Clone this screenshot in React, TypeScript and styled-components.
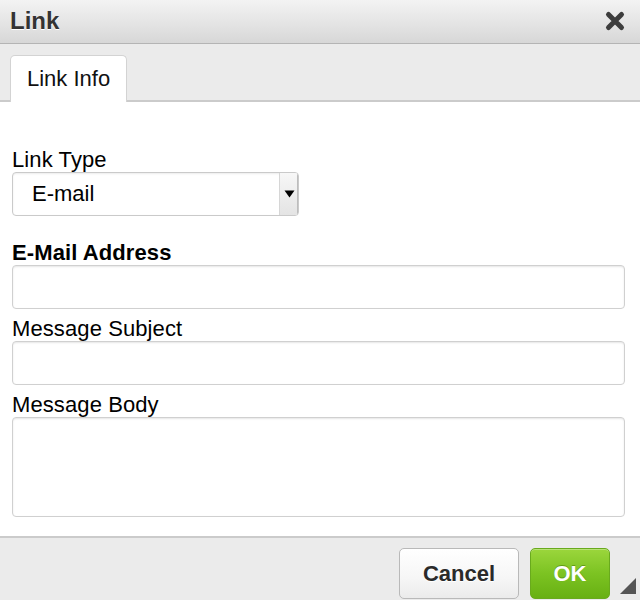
import React, { FC } from 'react';
import styled, { createGlobalStyle } from 'styled-components';

const GlobalStyle = createGlobalStyle`
  html, body {
    margin: 0;
    padding: 0;
    background: #ffffff;
  }
  body {
    font-family: "Liberation Sans", Arial, Helvetica, sans-serif;
    color: #000;
  }
  * {
    box-sizing: border-box;
  }
`

const StyledDialog = styled.div`
  position: relative;
  width: 640px;
  height: 600px;
  display: flex;
  flex-direction: column;
  overflow: hidden;
  background: #fff;
`

const StyledTitleBar = styled.div`
  height: 44px;
  display: flex;
  align-items: center;
  justify-content: space-between;
  padding: 0 13px 2px 10px;
  background: linear-gradient(to bottom, #f3f3f3 0%, #e4e4e4 55%, #d7d7d7 100%);
  border-bottom: 1px solid #b4b4b4;

  h1 {
    margin: 0;
    font-size: 24px;
    font-weight: bold;
    color: #333;
    text-shadow: 0 1px 0 #fff;
  }
`

const StyledClose = styled.button`
  border: 0;
  background: transparent;
  padding: 0;
  width: 24px;
  height: 24px;
  display: flex;
  align-items: center;
  justify-content: center;
  cursor: pointer;
`

const StyledTabBar = styled.div`
  height: 58px;
  display: flex;
  align-items: flex-end;
  padding-left: 10px;
  background: #ebebeb;
  border-bottom: 2px solid #cbcbcb;
`

const StyledTab = styled.div<{ active?: boolean }>`
  height: 47px;
  margin-bottom: -2px;
  padding: 0 16px;
  display: flex;
  align-items: center;
  font-size: 22px;
  color: #111;
  background: ${({ active }) => (active ? '#fff' : '#e2e2e2')};
  border: 1px solid #d3d3d3;
  border-bottom: none;
  border-radius: 5px 5px 0 0;
`

const StyledBody = styled.div`
  flex: 1;
  padding: 46px 15px 0 12px;
  background: #fff;
`

const StyledLabel = styled.label<{ bold?: boolean; gap?: number }>`
  display: block;
  height: 24px;
  line-height: 24px;
  margin-top: ${({ gap }) => gap ?? 0}px;
  font-size: 22px;
  letter-spacing: 0.1px;
  font-weight: ${({ bold }) => (bold ? 'bold' : 'normal')};
  color: #000;
`

const StyledSelect = styled.div`
  width: 287px;
  height: 44px;
  display: flex;
  border: 1px solid #cacaca;
  border-radius: 4px;
  background: #fff;
  box-shadow: inset 0 1px 2px rgba(0, 0, 0, 0.08);
  overflow: hidden;

  span {
    flex: 1;
    display: flex;
    align-items: center;
    padding-left: 19px;
    font-size: 22px;
    color: #000;
  }
`

const StyledSelectArrow = styled.div`
  width: 19px;
  display: flex;
  align-items: center;
  justify-content: center;
  border-left: 1px solid #d6d6d6;
  background: linear-gradient(to bottom, #f7f7f7 0%, #e4e4e4 100%);
  box-shadow: inset -1px 0 0 #bdbdbd;
`

const StyledInput = styled.input`
  display: block;
  width: 100%;
  height: 44px;
  margin: 0;
  padding: 0 10px;
  border: 1px solid #d0d0d0;
  border-radius: 4px;
  background: #fff;
  box-shadow: inset 0 1px 2px rgba(0, 0, 0, 0.1);
  font-family: inherit;
  font-size: 22px;
  outline: none;
`

const StyledTextArea = styled.textarea`
  display: block;
  width: 100%;
  height: 100px;
  margin: 0;
  padding: 8px 10px;
  border: 1px solid #d0d0d0;
  border-radius: 4px;
  background: #fff;
  box-shadow: inset 0 1px 2px rgba(0, 0, 0, 0.1);
  font-family: inherit;
  font-size: 22px;
  resize: none;
  outline: none;
`

const StyledFooter = styled.div`
  height: 64px;
  display: flex;
  justify-content: flex-end;
  align-items: flex-start;
  gap: 11px;
  padding: 10px 30px 0 0;
  background: #ebebeb;
  border-top: 2px solid #cbcbcb;
`

const StyledButton = styled.button<{ primary?: boolean; width: number }>`
  width: ${({ width }) => width}px;
  height: 51px;
  border-radius: 5px;
  font-family: inherit;
  font-size: 22px;
  font-weight: bold;
  cursor: pointer;
  color: ${({ primary }) => (primary ? '#fff' : '#2a2a2a')};
  border: 1px solid ${({ primary }) => (primary ? '#69aa1d' : '#b9b9b9')};
  background: ${({ primary }) =>
    primary
      ? 'linear-gradient(to bottom, #9bd63c 0%, #7cc322 50%, #68b013 100%)'
      : 'linear-gradient(to bottom, #ffffff 0%, #f6f6f6 60%, #ebebeb 100%)'};
  text-shadow: ${({ primary }) => (primary ? '0 -1px 0 rgba(60,110,0,0.5)' : '0 1px 0 #fff')};
  box-shadow: ${({ primary }) =>
    primary ? 'inset 0 1px 0 rgba(255,255,255,0.3)' : 'inset 0 1px 0 #fff'};
`

const StyledGrip = styled.div`
  position: absolute;
  right: 4px;
  bottom: 6px;
  width: 0;
  height: 0;
  border-style: solid;
  border-width: 0 0 16px 16px;
  border-color: transparent transparent #555 transparent;
`

const CloseIcon: FC = () => (
  <svg width="22" height="22" viewBox="0 0 22 22">
    <path d="M4.5 4.5 L17.5 17.5 M17.5 4.5 L4.5 17.5" stroke="#3d3d3d" strokeWidth="5" strokeLinecap="round" />
  </svg>
);

const ArrowIcon: FC = () => (
  <svg width="11" height="8" viewBox="0 0 11 8">
    <path d="M0.5 0.5 H10.5 L5.5 7.5 Z" fill="#000" />
  </svg>
);

const App: FC = () => (
  <React.Fragment>
    <GlobalStyle />
    <StyledDialog>
      <StyledTitleBar>
        <h1>Link</h1>
        <StyledClose aria-label="Close">
          <CloseIcon />
        </StyledClose>
      </StyledTitleBar>
      <StyledTabBar>
        <StyledTab active>Link Info</StyledTab>
      </StyledTabBar>
      <StyledBody>
        <StyledLabel>Link Type</StyledLabel>
        <StyledSelect>
          <span>E-mail</span>
          <StyledSelectArrow>
            <ArrowIcon />
          </StyledSelectArrow>
        </StyledSelect>
        <StyledLabel bold gap={25}>E-Mail Address</StyledLabel>
        <StyledInput type="text" />
        <StyledLabel gap={8}>Message Subject</StyledLabel>
        <StyledInput type="text" />
        <StyledLabel gap={8}>Message Body</StyledLabel>
        <StyledTextArea />
      </StyledBody>
      <StyledFooter>
        <StyledButton width={120}>Cancel</StyledButton>
        <StyledButton primary width={80}>OK</StyledButton>
      </StyledFooter>
      <StyledGrip />
    </StyledDialog>
  </React.Fragment>
);

export default App;
